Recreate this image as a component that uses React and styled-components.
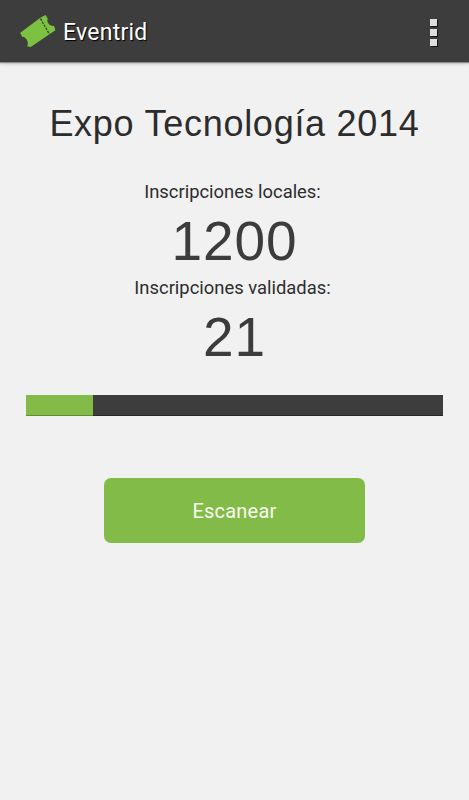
import React from 'react';
import styled, { createGlobalStyle } from 'styled-components';

const GlobalStyle = createGlobalStyle`
  * { box-sizing: border-box; }
  body { margin: 0; background: #f1f1f1; }
`;

const Screen = styled.div`
  display: flex;
  flex-direction: column;
  min-height: 800px;
  background: #f1f1f1;
  font-family: Roboto, sans-serif;
`;

const ActionBar = styled.header`
  display: flex;
  align-items: center;
  height: 62px;
  padding: 0 32px 0 18px;
  background: #3d3d3d;
  box-shadow: 0 1px 1px #8c8c8c, 0 2px 3px #c9c9c9;
`;

const Logo = styled.svg`
  width: 40px;
  height: 36px;
  flex: none;
`;

const Brand = styled.span`
  flex: 1;
  margin-left: 5px;
  padding-top: 3px;
  color: #fff;
  font-size: 23px;
  line-height: 28px;
  letter-spacing: 0.25px;
  text-shadow: 1px 1px 1px #000;
`;

const MenuButton = styled.button`
  display: flex;
  flex-direction: column;
  gap: 3px;
  padding: 2px 0 0;
  border: 0;
  background: none;
`;

const MenuDot = styled.span`
  width: 7px;
  height: 7px;
  background: #dedede;
  box-shadow: 1px 1px 0 #111;
`;

const Content = styled.main`
  display: flex;
  flex-direction: column;
  padding: 39px 26px 0;
  text-align: center;
`;

const Title = styled.h1`
  margin: 0 -10px 32px;
  color: #2c2c2c;
  font: 400 36px/46px "Liberation Sans", sans-serif;
  letter-spacing: 0.73px;
  white-space: nowrap;
`;

const Stat = styled.section`
  display: flex;
  flex-direction: column;
  height: 96px;
`;

const StatLabel = styled.span`
  margin-left: -4px;
  color: #2d2d2d;
  font-size: 18.4px;
  line-height: 26px;
`;

const StatValue = styled.span`
  color: #3c3c3c;
  font: 400 55px/70px "Liberation Sans", sans-serif;
  letter-spacing: 0.9px;
  margin-top: 1px;
`;

const ProgressTrack = styled.div`
  height: 21px;
  margin-top: 24px;
  background: #3d3d3d;
  box-shadow: inset 0 -1px 0 rgba(0, 0, 0, 0.35);
`;

const ProgressFill = styled.div`
  width: ${({ $percent }) => $percent}%;
  height: 100%;
  background: #83bb49;
  box-shadow: inset 0 -1px 0 #608c36;
`;

const ScanButton = styled.button`
  align-self: center;
  width: 261px;
  height: 65px;
  margin-top: 62px;
  padding: 0;
  border: 0;
  border-radius: 7px;
  background: #83bb49;
  color: #f8fff0;
  font: 400 20px/24px Roboto, sans-serif;
  letter-spacing: 0.2px;
`;

function TicketLogo() {
  return (
    <Logo viewBox="0 0 40 36" aria-hidden="true">
      <path
        d="M2.3 19.7 22.7 4.4 27.6 2 29.8 5.8C28.2 8 31 14 36 12.7L37.4 17.2 12.7 34 9.1 33.2C11.3 30 8.5 24 4.1 23.8Z"
        fill="#7dc142"
      />
      <path d="M22.5 5.7 31.6 21.4" stroke="#343d2d" strokeWidth="1.3" strokeDasharray="2.3 1.2" />
    </Logo>
  );
}

export default function App() {
  return (
    <>
      <GlobalStyle />
      <Screen>
        <ActionBar>
          <TicketLogo />
          <Brand>Eventrid</Brand>
          <MenuButton aria-label="Menú">
            <MenuDot />
            <MenuDot />
            <MenuDot />
          </MenuButton>
        </ActionBar>
        <Content>
          <Title>Expo Tecnología 2014</Title>
          <Stat>
            <StatLabel>Inscripciones locales:</StatLabel>
            <StatValue>1200</StatValue>
          </Stat>
          <Stat>
            <StatLabel>Inscripciones validadas:</StatLabel>
            <StatValue>21</StatValue>
          </Stat>
          <ProgressTrack>
            <ProgressFill $percent={16.1} />
          </ProgressTrack>
          <ScanButton>Escanear</ScanButton>
        </Content>
      </Screen>
    </>
  );
}
